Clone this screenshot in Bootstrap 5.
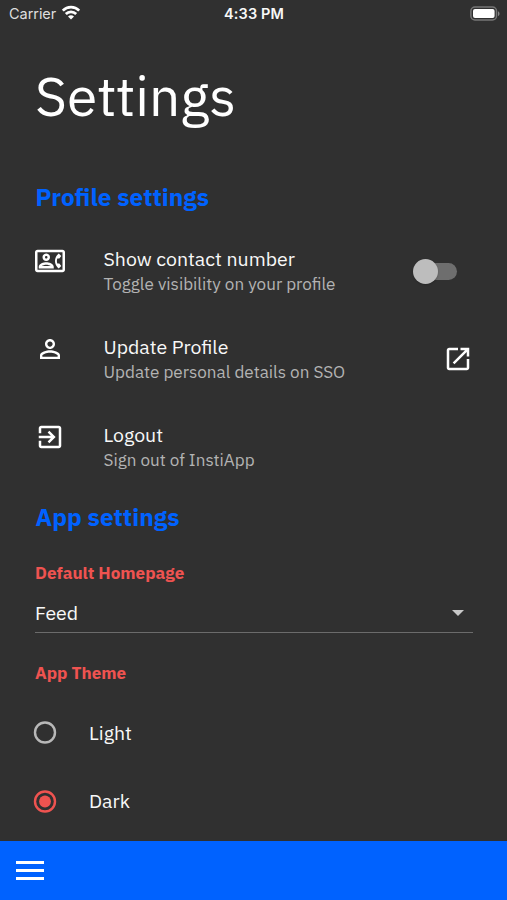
<!DOCTYPE html>
<html lang="en" data-bs-theme="dark">
<head>
<meta charset="utf-8">
<meta name="viewport" content="width=device-width, initial-scale=1">
<title>Settings</title>
<link href="https://cdn.jsdelivr.net/npm/bootstrap@5.3.0/dist/css/bootstrap.min.css" rel="stylesheet">
<style>
  body { background: #303030; color: #f8f8f8; font-family: "IBM Plex Sans", "Open Sans", sans-serif; font-size: 19.5px; }
  .screen { height: 900px; overflow: hidden; }
  .status { height: 27px; font-family: Inter, sans-serif; font-size: 14.5px; line-height: 27px; padding: 0 7px 0 9px; }
  .status > * { flex: 1 1 0; }
  .carrier { color: #dedede; letter-spacing: -.05px; }
  .wifi { margin-left: 5px; margin-top: -1px; }
  .clock { font-weight: 600; letter-spacing: .1px; margin-left: -1px; }
  .content { padding: 0 35px; }
  .title { font-size: 55px; font-weight: 400; line-height: 74px; margin: 32px 0 0; color: #fff; }
  .section { color: #0062ff; font-size: 24.4px; font-weight: 700; line-height: 34px; margin: 0; padding-left: .5px; }
  .profile { margin-top: 47px; margin-bottom: 13px; }
  .tile { height: 88px; padding-top: 19px; }
  .tile-icon { width: 30px; height: 30px; margin-right: 38.5px; fill: #fff; flex: none; }
  .tile-title { line-height: 25px; }
  .tile-sub { font-size: 17.1px; line-height: 25px; color: #b3b3b3; }
  .trail { height: 50px; }
  .track { width: 41px; height: 17px; border-radius: 9px; background: #6e6e6e; margin-right: 15px; }
  .knob { display: block; width: 25px; height: 25px; border-radius: 50%; background: #bdbdbd; margin-left: -3px; box-shadow: 0 1px 2px rgba(0,0,0,.2); }
  .open-icon { margin-right: -1px; }
  .label-red { color: #ef5350; font-size: 17.1px; font-weight: 700; line-height: 24px; }
  .app { margin-top: 9px; margin-bottom: 27px; }
  .picker { height: 39px; width: 438px; border-bottom: 1px solid #6b6b6b; padding-right: 9px; margin-top: 9px; margin-bottom: 28px; }
  .choices { padding-top: 13px; }
  .choice { height: 68.5px; }
  .choice svg { margin: 0 32px 0 -2px; }
  .bottom { height: 59px; background: #0062ff; padding-left: 16px; }
</style>
</head>
<body>
<div class="screen d-flex flex-column">
  <header class="status d-flex align-items-center">
    <div class="d-flex align-items-center"><span class="carrier">Carrier</span>
      <svg class="wifi" width="20" height="16" viewBox="0 0 20 16"><g fill="none" stroke="#fff" stroke-width="2.7"><path d="M1.8 5.6a11.6 11.6 0 0 1 16.4 0"/><path d="M4.8 9a7.3 7.3 0 0 1 10.4 0"/></g><path fill="#fff" d="M10 14.6 7 11.6a4.3 4.3 0 0 1 6 0z"/></svg>
    </div>
    <div class="clock text-center">4:33 PM</div>
    <div class="d-flex justify-content-end">
      <svg width="30" height="16" viewBox="0 0 30 16"><rect x=".9" y="1" width="25.6" height="13" rx="4" fill="none" stroke="#757575" stroke-width="1.5"/><rect x="3" y="3" width="21.6" height="9" rx="2" fill="#fff"/><path fill="#858585" d="M28 5.2c2 .8 2 4 0 4.8z"/></svg>
    </div>
  </header>
  <main class="content flex-grow-1">
    <h1 class="title">Settings</h1>
    <h2 class="section profile">Profile settings</h2>
    <div class="tile d-flex">
      <svg class="tile-icon" viewBox="0 0 24 24"><path d="M22 3H2C.9 3 0 3.9 0 5v14c0 1.1.9 2 2 2h20c1.1 0 1.99-.9 1.99-2L24 5c0-1.1-.9-2-2-2zm0 16H2V5h20v14zm-2.99-1.01L21 16l-1.51-2h-1.64c-.22-.63-.35-1.3-.35-2s.13-1.37.35-2h1.64L21 8l-1.99-1.99c-1.31.98-2.28 2.37-2.73 3.99-.18.64-.28 1.31-.28 2s.1 1.36.28 2c.45 1.61 1.42 3.01 2.73 3.99zM9 12c1.65 0 3-1.35 3-3s-1.35-3-3-3-3 1.35-3 3 1.35 3 3 3zm0-4c.55 0 1 .45 1 1s-.45 1-1 1-1-.45-1-1 .45-1 1-1zm6 8.59c0-2.5-3.97-3.58-6-3.58s-6 1.08-6 3.58V18h12v-1.41zM5.48 16c.74-.5 2.22-1 3.52-1s2.77.49 3.52 1H5.48z"/></svg>
      <div class="flex-grow-1"><div class="tile-title">Show contact number</div><div class="tile-sub">Toggle visibility on your profile</div></div>
      <div class="trail d-flex align-items-center"><div class="track d-flex align-items-center"><span class="knob"></span></div></div>
    </div>
    <div class="tile d-flex">
      <svg class="tile-icon" viewBox="0 0 24 24"><path d="M12 5.9c1.16 0 2.1.94 2.1 2.1s-.94 2.1-2.1 2.1S9.9 9.16 9.9 8s.94-2.1 2.1-2.1m0 9c2.97 0 6.1 1.46 6.1 2.1v1.1H5.9V17c0-.64 3.13-2.1 6.1-2.1M12 4C9.79 4 8 5.79 8 8s1.79 4 4 4 4-1.79 4-4-1.79-4-4-4zm0 9c-2.67 0-8 1.34-8 4v3h16v-3c0-2.66-5.33-4-8-4z"/></svg>
      <div class="flex-grow-1"><div class="tile-title">Update Profile</div><div class="tile-sub">Update personal details on SSO</div></div>
      <div class="trail d-flex align-items-center"><svg class="open-icon" width="30" height="30" viewBox="0 0 24 24" fill="#fff"><path d="M19 19H5V5h7V3H5c-1.11 0-2 .9-2 2v14c0 1.1.89 2 2 2h14c1.1 0 2-.9 2-2v-7h-2v7zM14 3v2h3.59l-9.83 9.83 1.41 1.41L19 6.41V10h2V3h-7z"/></svg></div>
    </div>
    <div class="tile d-flex">
      <svg class="tile-icon" viewBox="0 0 24 24"><path d="M10.09 15.59L11.5 17l5-5-5-5-1.41 1.41L12.67 11H3v2h9.67l-2.58 2.59zM19 3H5c-1.11 0-2 .9-2 2v4h2V5h14v14H5v-4H3v4c0 1.1.89 2 2 2h14c1.1 0 2-.9 2-2V5c0-1.1-.9-2-2-2z"/></svg>
      <div class="flex-grow-1"><div class="tile-title">Logout</div><div class="tile-sub">Sign out of InstiApp</div></div>
    </div>
    <h2 class="section app">App settings</h2>
    <div class="label-red">Default Homepage</div>
    <div class="picker d-flex align-items-center justify-content-between"><span>Feed</span>
      <svg width="12" height="6" viewBox="0 0 12 6"><path fill="#c8c8c8" d="M0 0h12L6 6z"/></svg>
    </div>
    <div class="label-red">App Theme</div>
    <div class="choices">
      <div class="choice d-flex align-items-center"><svg width="24" height="24"><circle cx="12" cy="12.5" r="10" fill="none" stroke="#b8b8b8" stroke-width="2.4"/></svg><span>Light</span></div>
      <div class="choice d-flex align-items-center"><svg width="24" height="24"><circle cx="12" cy="12.5" r="10" fill="none" stroke="#ef5350" stroke-width="2.4"/><circle cx="12" cy="12.5" r="5.9" fill="#ef5350"/></svg><span>Dark</span></div>
    </div>
  </main>
  <footer class="bottom d-flex align-items-center flex-shrink-0">
    <svg width="28" height="19" viewBox="0 0 28 19" fill="#fff"><path d="M0 0h28v3H0zM0 8h28v3H0zM0 16h28v3H0z"/></svg>
  </footer>
</div>
<script src="https://cdn.jsdelivr.net/npm/bootstrap@5.3.0/dist/js/bootstrap.bundle.min.js"></script>
</body>
</html>
